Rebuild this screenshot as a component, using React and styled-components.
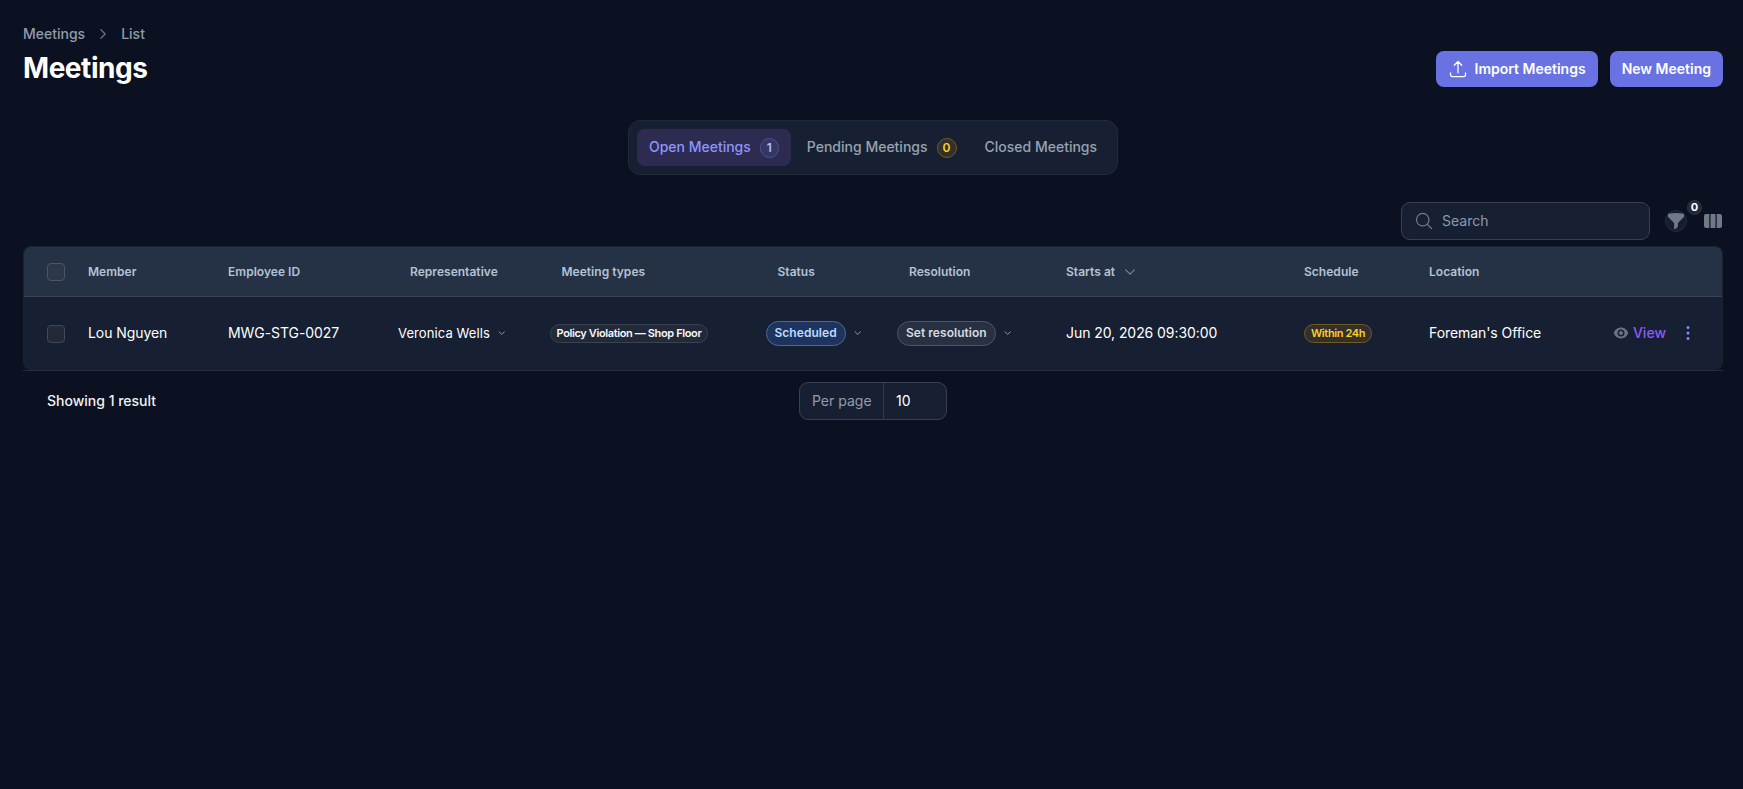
import React from "react";
import styled, { createGlobalStyle } from "styled-components";
import { HiFunnel, HiEye, HiMiniEllipsisVertical } from "react-icons/hi2";

const GlobalStyle = createGlobalStyle`
  *, *::before, *::after {
    box-sizing: border-box;
  }

  body {
    margin: 0;
    background: #0b1120;
    color: #ffffff;
    font-family: Inter, "Liberation Sans", sans-serif;
    font-size: 14px;
    line-height: 20px;
  }

  button {
    font: inherit;
    color: inherit;
    border: 0;
    background: none;
    padding: 0;
  }
`;

const Page = styled.main`
  min-height: 100vh;
  padding: 24px 20px 0 23px;
`;

const Header = styled.header`
  display: flex;
  align-items: flex-start;
  justify-content: space-between;
  height: 64px;
`;

const Breadcrumbs = styled.nav`
  display: flex;
  align-items: center;
  gap: 11px;
  font-weight: 500;
  color: #929cab;
`;

const Title = styled.h1`
  margin: 6px 0 0;
  font-size: 28px;
  line-height: 36px;
  font-weight: 700;
  letter-spacing: -0.016em;
`;

const HeaderActions = styled.div`
  display: flex;
  gap: 12px;
  align-self: flex-end;
  margin-bottom: 1px;
`;

const PrimaryButton = styled.button`
  display: flex;
  align-items: center;
  gap: 7px;
  height: 36px;
  padding: 0 12px;
  border-radius: 8px;
  background: #6872e2;
  font-weight: 600;
`;

const Tabs = styled.nav`
  display: flex;
  gap: 4px;
  width: max-content;
  margin: 32px auto 0;
  padding: 8px;
  border: 1px solid #222a38;
  border-radius: 12px;
  background: #172032;
`;

const Tab = styled.button`
  display: flex;
  align-items: center;
  gap: 9px;
  height: 37px;
  padding: 0 12px;
  border-radius: 8px;
  font-weight: 500;
  background: ${(props) => (props.$active ? "#2e2b52" : "transparent")};
  color: ${(props) => (props.$active ? "#8b96fb" : "#98a2b1")};
`;

const TabLabel = styled.span`
  padding-bottom: 1px;
`;

const tones = {
  indigo: { color: "#b4bdfd", background: "#343763", border: "#4c5190" },
  amber: { color: "#fdd022", background: "#332f2d", border: "#735b1d" },
  gray: { color: "#f6f7f9", background: "#222938", border: "#3a4150" },
  blue: { color: "#bfdbfe", background: "#1e335e", border: "#4a6897" },
  slate: { color: "#d6dae0", background: "#283142", border: "#4a5567" },
};

const Badge = styled.span`
  display: inline-flex;
  align-items: center;
  justify-content: center;
  height: 19px;
  padding: 0 6px;
  border: 1px solid ${(props) => tones[props.$tone].border};
  border-radius: 999px;
  background: ${(props) => tones[props.$tone].background};
  color: ${(props) => tones[props.$tone].color};
  font-size: 11px;
  line-height: 16px;
  font-weight: 600;
  letter-spacing: -0.034em;
  white-space: nowrap;
`;

const CountBadge = styled(Badge)`
  width: ${(props) => (props.$tone === "amber" ? "20px" : "19px")};
  height: 20px;
  padding: 0;
  font-size: 12px;
  letter-spacing: 0;
`;

const Pill = styled(Badge)`
  height: 25px;
  padding: 0 8px;
  font-size: 12px;
  letter-spacing: 0.04px;
`;

const Toolbar = styled.div`
  display: flex;
  align-items: center;
  justify-content: flex-end;
  height: 38px;
  margin: 27px 0 6px;
`;

const SearchBox = styled.div`
  display: flex;
  align-items: center;
  gap: 8px;
  width: 249px;
  height: 38px;
  padding: 0 12px;
  border: 1px solid #3a414e;
  border-radius: 9px;
  background: #172032;
  color: #8c9ab0;
`;

const FilterButton = styled.button`
  position: relative;
  display: flex;
  align-items: center;
  justify-content: center;
  width: 22px;
  height: 22px;
  margin: 0 17px 0 15px;
  border: 1px solid #222c3e;
  border-radius: 50%;
  background: #151e2f;
  color: #717886;
`;

const FilterCount = styled.span`
  position: absolute;
  top: -11px;
  right: -16px;
  width: 15px;
  height: 15px;
  border: 1px solid #2c3341;
  border-radius: 50%;
  background: #222938;
  color: #ffffff;
  font-size: 11px;
  line-height: 13px;
  font-weight: 700;
  text-align: center;
`;

const ColumnsButton = styled.button`
  display: flex;
  margin-right: 1px;
  color: #717886;
`;

const Table = styled.section`
  border: 1px solid #1a2332;
  border-bottom: 0;
  border-radius: 8px;
  background: #172032;
  overflow: hidden;
`;

const TableRow = styled.div`
  display: grid;
  grid-template-columns: 41px 140px 170px 151.5px 216px 131.5px 169px 238px 125px 1fr;
  align-items: center;
  height: 73px;
  padding: 0 30px 0 23px;
`;

const HeadRow = styled(TableRow)`
  height: 50px;
  border-bottom: 1px solid #394354;
  background: #253246;
  color: #b4c2d4;
  font-size: 12px;
  font-weight: 600;
`;

const HeadCell = styled.span`
  display: flex;
  align-items: center;
  gap: 8px;
  padding-left: ${(props) => (props.$inset ? "12px" : "0")};
  letter-spacing: 0.03px;
`;

const Cell = styled.div`
  display: flex;
  align-items: center;
  gap: 7px;
  white-space: nowrap;
`;

const TextCell = styled(Cell)`
  padding-bottom: 1px;
  letter-spacing: -0.07px;
`;

const SelectCell = styled(TextCell)`
  font-size: 13px;
  letter-spacing: 0.1px;
`;

const BadgeCell = styled(Cell)`
  padding-bottom: 1px;
`;

const LastCell = styled(TextCell)`
  justify-content: space-between;
`;

const Actions = styled.div`
  display: flex;
  align-items: center;
  gap: 12px;
`;

const ViewLink = styled.a`
  display: flex;
  align-items: center;
  gap: 4px;
  color: #8b5cf6;
  font-weight: 500;
  letter-spacing: 0;

  svg {
    color: #6b7280;
  }
`;

const MenuButton = styled.button`
  display: flex;
  margin-right: -6px;
  color: #818cf8;
`;

const Checkbox = styled.span`
  width: 18px;
  height: 18px;
  border: 1px solid ${(props) => (props.$head ? "#4b5567" : "#454955")};
  border-radius: 4px;
  background: ${(props) => (props.$head ? "#2c3849" : "#242939")};
`;

const Footer = styled.footer`
  display: grid;
  grid-template-columns: 1fr auto 1fr;
  align-items: center;
  height: 61px;
  padding: 0 24px;
  border-top: 1px solid #252d3a;
  font-weight: 500;
  color: #f0f1f4;
`;

const PerPage = styled.div`
  display: flex;
  width: 148px;
  height: 38px;
  border: 1px solid #3a414e;
  border-radius: 9px;
  background: #172032;
  line-height: 36px;
  font-weight: 400;
  color: #ffffff;
`;

const PerPageLabel = styled.span`
  width: 84px;
  padding-left: 12px;
  border-right: 1px solid #343b49;
  color: #929cab;
`;

const PerPageValue = styled.span`
  padding-left: 12px;
`;

const StrokeIcon = ({ size = 20, width = 1.5, color = "currentColor", d }) => (
  <svg
    width={size}
    height={size}
    viewBox="0 0 24 24"
    fill="none"
    stroke={color}
    strokeWidth={width}
    strokeLinecap="round"
    strokeLinejoin="round"
  >
    <path d={d} />
  </svg>
);

const CHEVRON_DOWN = "m19.5 8.25-7.5 7.5-7.5-7.5";
const CHEVRON_RIGHT = "m8.25 4.5 7.5 7.5-7.5 7.5";
const UPLOAD =
  "M3 16.5v2.25A2.25 2.25 0 0 0 5.25 21h13.5A2.25 2.25 0 0 0 21 18.75V16.5m-13.5-9L12 3m0 0 4.5 4.5M12 3v13.5";
const SEARCH =
  "m21 21-5.197-5.197m0 0A7.5 7.5 0 1 0 5.196 5.196a7.5 7.5 0 0 0 10.607 10.607Z";

const Caret = () => (
  <svg width="9" height="10" viewBox="0 0 9 10" fill="none" stroke="#8d96a5">
    <path d="M2 3.8l2.7 2.5 2.7-2.5" strokeLinecap="round" />
  </svg>
);

const ColumnsIcon = () => (
  <svg width="18" height="14" viewBox="0 0 18 14" fill="currentColor">
    <path d="M2 0h3.3v14H2a2 2 0 0 1-2-2V2a2 2 0 0 1 2-2Z" />
    <path d="M6.5 0h5v14h-5z" />
    <path d="M12.7 0H16a2 2 0 0 1 2 2v10a2 2 0 0 1-2 2h-3.3z" />
  </svg>
);

const columns = [
  { label: "Member" },
  { label: "Employee ID" },
  { label: "Representative", inset: true },
  { label: "Meeting types", inset: true },
  { label: "Status", inset: true },
  { label: "Resolution", inset: true },
  { label: "Starts at", sorted: true },
  { label: "Schedule" },
  { label: "Location" },
];

const meetings = [
  {
    member: "Lou Nguyen",
    employeeId: "MWG-STG-0027",
    representative: "Veronica Wells",
    type: "Policy Violation — Shop Floor",
    status: "Scheduled",
    resolution: "Set resolution",
    startsAt: "Jun 20, 2026 09:30:00",
    schedule: "Within 24h",
    location: "Foreman's Office",
  },
];

const MeetingRow = ({ meeting }) => (
  <TableRow>
    <Checkbox />
    <TextCell>{meeting.member}</TextCell>
    <TextCell>{meeting.employeeId}</TextCell>
    <SelectCell>
      {meeting.representative}
      <Caret />
    </SelectCell>
    <BadgeCell>
      <Badge $tone="gray">{meeting.type}</Badge>
    </BadgeCell>
    <BadgeCell>
      <Pill $tone="blue">{meeting.status}</Pill>
      <Caret />
    </BadgeCell>
    <BadgeCell>
      <Pill $tone="slate">{meeting.resolution}</Pill>
      <Caret />
    </BadgeCell>
    <TextCell>{meeting.startsAt}</TextCell>
    <BadgeCell>
      <Badge $tone="amber">{meeting.schedule}</Badge>
    </BadgeCell>
    <LastCell>
      {meeting.location}
      <Actions>
        <ViewLink>
          <HiEye size={16} />
          View
        </ViewLink>
        <MenuButton>
          <HiMiniEllipsisVertical size={20} />
        </MenuButton>
      </Actions>
    </LastCell>
  </TableRow>
);

const App = () => (
  <>
    <GlobalStyle />
    <Page>
      <Header>
        <div>
          <Breadcrumbs>
            <span>Meetings</span>
            <StrokeIcon size={14} width={2.4} color="#6b7280" d={CHEVRON_RIGHT} />
            <span>List</span>
          </Breadcrumbs>
          <Title>Meetings</Title>
        </div>
        <HeaderActions>
          <PrimaryButton>
            <StrokeIcon d={UPLOAD} />
            Import Meetings
          </PrimaryButton>
          <PrimaryButton>New Meeting</PrimaryButton>
        </HeaderActions>
      </Header>

      <Tabs>
        <Tab $active>
          <TabLabel>Open Meetings</TabLabel>
          <CountBadge $tone="indigo">1</CountBadge>
        </Tab>
        <Tab>
          <TabLabel>Pending Meetings</TabLabel>
          <CountBadge $tone="amber">0</CountBadge>
        </Tab>
        <Tab>
          <TabLabel>Closed Meetings</TabLabel>
        </Tab>
      </Tabs>

      <Toolbar>
        <SearchBox>
          <StrokeIcon color="#717886" d={SEARCH} />
          Search
        </SearchBox>
        <FilterButton>
          <HiFunnel size={20} />
          <FilterCount>0</FilterCount>
        </FilterButton>
        <ColumnsButton>
          <ColumnsIcon />
        </ColumnsButton>
      </Toolbar>

      <Table>
        <HeadRow>
          <Checkbox $head />
          {columns.map((column) => (
            <HeadCell key={column.label} $inset={column.inset}>
              {column.label}
              {column.sorted && (
                <StrokeIcon
                  size={14}
                  width={2}
                  color="#7a8494"
                  d={CHEVRON_DOWN}
                />
              )}
            </HeadCell>
          ))}
        </HeadRow>
        {meetings.map((meeting) => (
          <MeetingRow key={meeting.employeeId} meeting={meeting} />
        ))}
      </Table>

      <Footer>
        <span>Showing 1 result</span>
        <PerPage>
          <PerPageLabel>Per page</PerPageLabel>
          <PerPageValue>10</PerPageValue>
        </PerPage>
      </Footer>
    </Page>
  </>
);

export default App;
